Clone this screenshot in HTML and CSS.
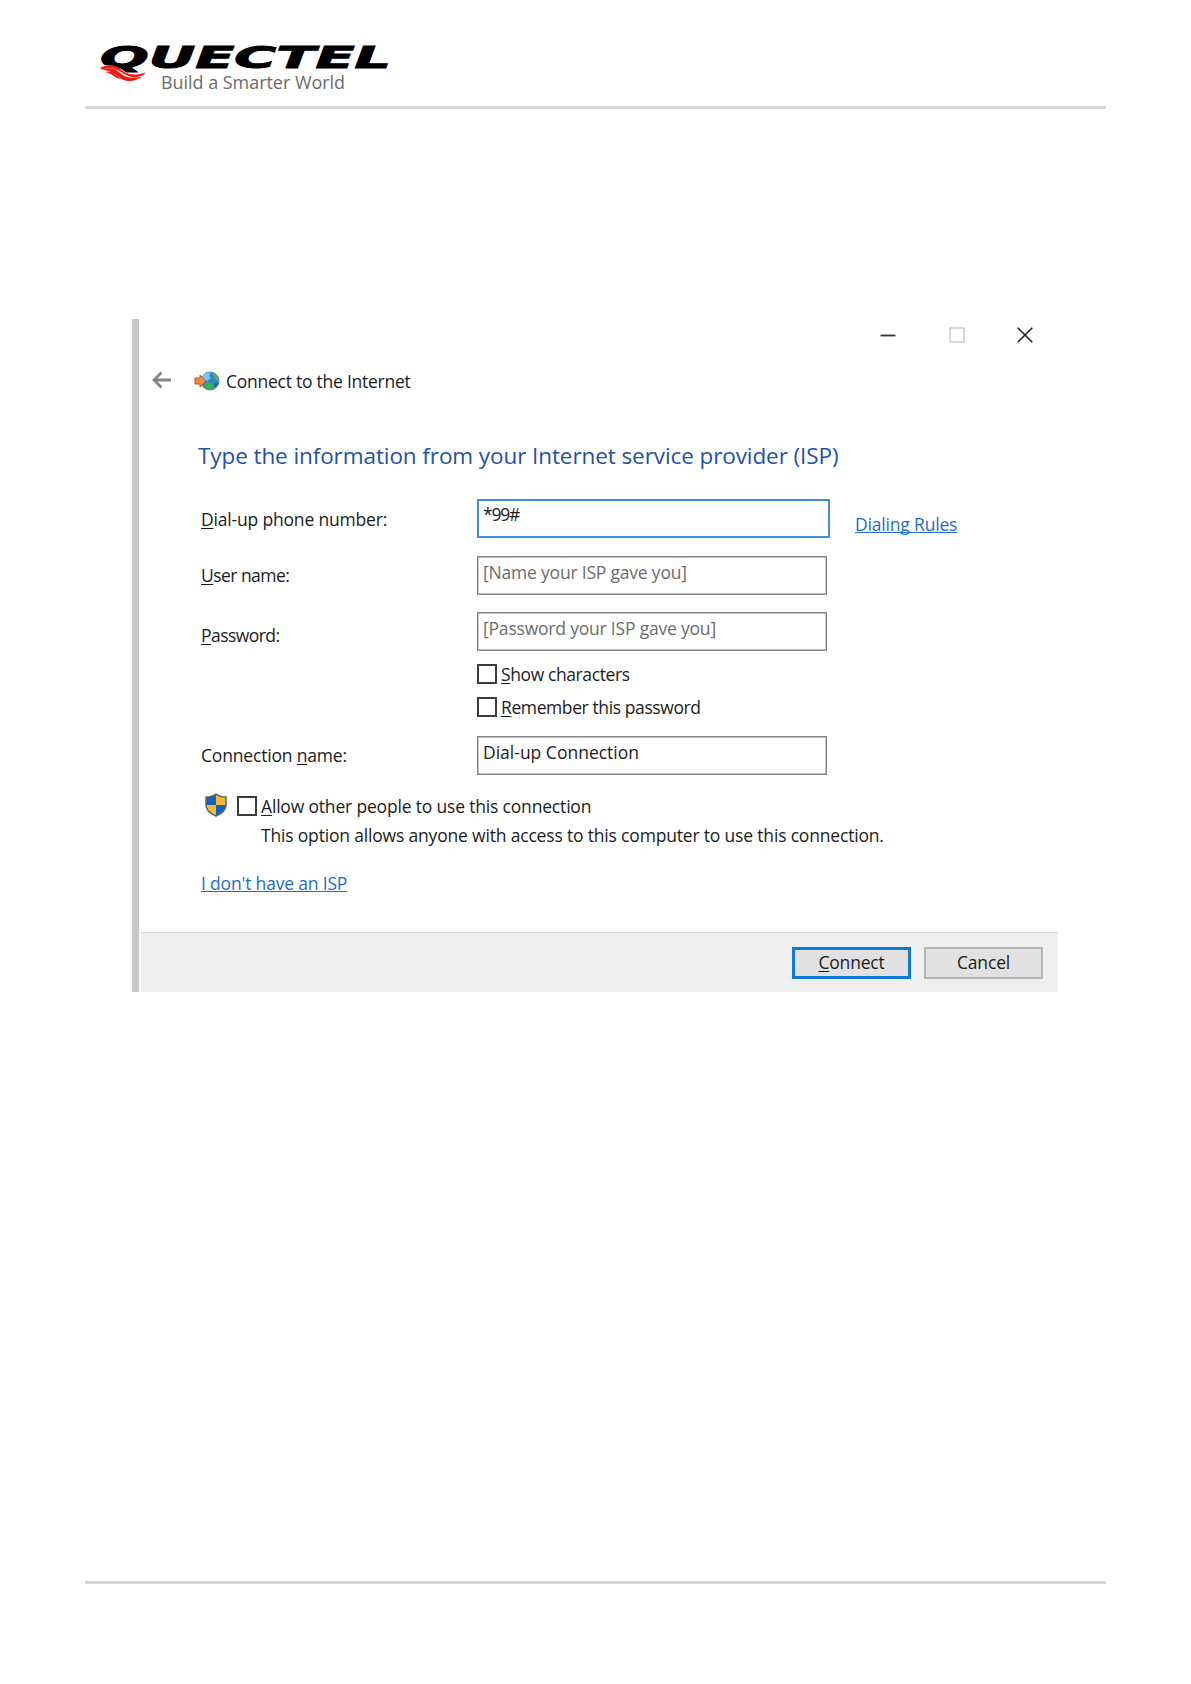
FILE: index.html
```html
<!DOCTYPE html>
<html lang="en">
<head>
  <meta charset="UTF-8" />
  <meta name="viewport" content="width=device-width, initial-scale=1.0"/>
  <title>Quectel - Connect to the Internet</title>
  <link rel="stylesheet" href="styles.css">
</head>
<body>

<header>
  <svg class="logo" width="310" height="62" viewBox="0 0 310 62">
    <text class="brand" x="15" y="29.500" textLength="291" lengthAdjust="spacingAndGlyphs">QUECTEL</text>
    <path class="swoosh-gap" d="M14 29C24 24 32 29 39 34C46 38 53 36 62 34L54 44L38 44Z"/>
    <path class="swoosh" d="M15 30C25 24 32 28 38 33C45 38 52 37 61 34.500C57 39 49 41 41 37C33 32 28 28 17 31.500Z"/>
    <path class="swoosh" d="M17 32C27 28 31 32 37 36.500C43 41 50 40 57 38.500C51 43.500 42 45 35 40C30 36 26 32 17 32Z"/>
    <path class="swoosh" d="M20 34C27 32 30 36 36 41C29 40 27 35 20 34Z"/>
    <text class="tagline" x="76" y="51" textLength="184" lengthAdjust="spacingAndGlyphs">Build a Smarter World</text>
  </svg>
</header>

<main>
  <div class="window">
    <div class="controls">
      <svg width="16" height="16" viewBox="0 0 16 16"><path d="M0.500 8.500H15.500" stroke="#333" stroke-width="1.800"/></svg>
      <svg width="16" height="16" viewBox="0 0 16 16"><rect x="1" y="1" width="14" height="14" fill="none" stroke="#c8c8c8" stroke-width="1.400"/></svg>
      <svg width="16" height="16" viewBox="0 0 16 16"><path d="M0.700 0.700L15.300 15.300M15.300 0.700L0.700 15.300" stroke="#222" stroke-width="1.600"/></svg>
    </div>

    <div class="titlebar">
      <svg class="back" width="20" height="18" viewBox="0 0 20 18"><path d="M19 9H2M9.500 1.500L2 9L9.500 16.500" fill="none" stroke="#858585" stroke-width="2.800"/></svg>
      <svg class="globe" width="26" height="20" viewBox="0 0 26 20">
        <circle cx="16" cy="10" r="9" fill="#2f83cf" stroke="#3d6f91" stroke-width="0.800"/>
        <path d="M8 6C10 2 14 1 17 1.500L15 5L17 7L13 10L9 9Z" fill="#79c9ed"/>
        <path d="M19 2C23 4 25 8 24.500 11L22 9L20 6Z" fill="#55bd45"/>
        <path d="M12 12L17 11L20 14L18 18.500C14 19.500 11 17 10 15Z" fill="#35b04b"/>
        <path d="M20 12L24 13L21 17Z" fill="#1761ab"/>
        <path d="M1 7H6V4L12 10L6 16V13H1Z" fill="#f08a45" stroke="#bd5423"/>
      </svg>
      <span>Connect to the Internet</span>
    </div>

    <h1>Type the information from your Internet service provider (ISP)</h1>

    <form>
      <div class="row phone">
        <label><u>D</u>ial-up phone number:</label>
        <div class="field focused">*99#</div>
        <a class="rules">Dialing Rules</a>
      </div>
      <div class="row user">
        <label><u>U</u>ser name:</label>
        <div class="field hint">[Name your ISP gave you]</div>
      </div>
      <div class="row password">
        <label><u>P</u>assword:</label>
        <div class="field hint">[Password your ISP gave you]</div>
      </div>
      <div class="check show"><i></i><span><u>S</u>how characters</span></div>
      <div class="check remember"><i></i><span><u>R</u>emember this password</span></div>
      <div class="row connection">
        <label>Connection <u>n</u>ame:</label>
        <div class="field">Dial-up Connection</div>
      </div>
      <div class="check allow">
        <svg class="shield" width="22" height="24" viewBox="0 0 22 24">
          <path d="M11 1C8 3.500 5 4 1 4V12C1 17 5 20.500 11 23Z" fill="#0d65c0"/>
          <path d="M11 1C14 3.500 17 4 21 4V12H11Z" fill="#fdb933"/>
          <path d="M1 12H11V23C5 20.500 1 17 1 12Z" fill="#fdb933"/>
          <path d="M11 12H21C21 17 17 20.500 11 23Z" fill="#0d65c0"/>
          <path d="M11 1C8 3.500 5 4 1 4V12C1 17 5 20.500 11 23C17 20.500 21 17 21 12V4C17 4 14 3.500 11 1Z" fill="none" stroke="#5d6468" stroke-width="1.500"/>
        </svg>
        <i></i><span><u>A</u>llow other people to use this connection</span>
      </div>
      <p>This option allows anyone with access to this computer to use this connection.</p>
      <a class="no-isp">I don't have an ISP</a>
    </form>

    <div class="actions">
      <div class="button default"><span><u>C</u>onnect</span></div>
      <div class="button">Cancel</div>
    </div>
  </div>
</main>

<footer></footer>

</body>
</html>
```

FILE: styles.css
```css
* {
  box-sizing: border-box;
}

body {
  margin: 0;
  height: 1684px;
  padding: 0 85px;
  display: flex;
  flex-direction: column;
  background: #fff;
  color: #1c1c1c;
  font-family: "Open Sans", "Noto Sans", sans-serif;
  font-size: 17.5px;
  line-height: 24px;
  letter-spacing: -0.18px;
}

header {
  height: 109px;
  padding-top: 38px;
  border-bottom: 3px solid #d5d5d5;
}

.logo {
  display: block;
}

.brand {
  font: italic bold 30px "DejaVu Sans", sans-serif;
  letter-spacing: 0;
  fill: #000;
  stroke: #000;
  stroke-width: 1px;
}

.tagline {
  font: 19px "Open Sans", sans-serif;
  letter-spacing: 0;
  fill: #6b6b6b;
}

.swoosh {
  fill: #f01a12;
}

.swoosh-gap {
  fill: #fff;
}

main {
  flex: 1;
  padding: 210px 0 0 47px;
}

.window {
  width: 926px;
  height: 673px;
  display: flex;
  flex-direction: column;
  border-left: 7px solid #c8c8c8;
}

.controls {
  display: flex;
  justify-content: flex-end;
  gap: 52.5px;
  height: 24px;
  padding: 8px 25px 0 0;
}

.titlebar {
  display: flex;
  align-items: center;
  margin-top: 26px;
  padding-left: 13px;
  height: 24px;
  letter-spacing: -0.25px;
}

.back {
  margin-top: -2px;
}

.globe {
  margin: 0 6px 0 22px;
}

h1 {
  margin: 47px 0 0 59px;
  color: #2450a8;
  font-size: 22.5px;
  font-weight: 400;
  line-height: 32px;
  letter-spacing: -0.09px;
  white-space: nowrap;
}

form {
  flex: 1;
  padding: 27px 0 0 62px;
}

.row {
  display: flex;
}

label {
  width: 276px;
}

.phone label {
  padding-top: 8px;
}

.user {
  margin-top: 18px;
}

.user label,
.connection label {
  padding-top: 7px;
}

.user label,
.password label {
  letter-spacing: -0.55px;
}

.password {
  margin-top: 17px;
}

.password label {
  padding-top: 11px;
}

.connection {
  margin-top: 17px;
}

.field {
  width: 350px;
  height: 39px;
  padding: 3px 5px;
  border: 1.5px solid #858585;
  box-shadow: inset 0 0 0 0.5px #858585;
  letter-spacing: 0;
}

.focused {
  width: 353px;
  padding: 1px 4px;
  border: 2px solid #3c8fdc;
  box-shadow: none;
  letter-spacing: -1.2px;
}

.hint {
  color: #6c6c6c;
  letter-spacing: -0.2px;
}

a {
  color: #1d6ccc;
  text-decoration: underline;
  text-decoration-skip-ink: none;
}

u {
  text-decoration-skip-ink: none;
  text-underline-offset: 2px;
}

.rules {
  margin: 13px 0 0 25px;
}

.check {
  display: flex;
  align-items: center;
  height: 24px;
}

.check i {
  width: 20px;
  height: 20px;
  margin-right: 4px;
  border: 2px solid #3c3c3c;
}

.show {
  margin: 11px 0 0 276px;
  letter-spacing: -0.4px;
}

.remember {
  margin: 9px 0 0 276px;
  letter-spacing: -0.4px;
}

.allow {
  margin: 19px 0 0 4px;
}

.shield {
  margin: -2px 10px 0 0;
}

p {
  margin: 5px 0 24px 60px;
}

.no-isp {
  display: block;
  width: max-content;
}

.actions {
  display: flex;
  justify-content: flex-end;
  gap: 13px;
  height: 60px;
  margin-left: 2px;
  padding: 14px 15px 0 0;
  background: #efefef;
  border-top: 1px solid #d9d9d9;
}

.button {
  width: 119px;
  height: 32px;
  border: 2px solid #b5b5b5;
  background: #e1e1e1;
  line-height: 26px;
  text-align: center;
}

.default {
  border: 3px solid #0f78d4;
  line-height: 24px;
}

footer {
  height: 103px;
  border-top: 3px solid #d5d5d5;
}
```
